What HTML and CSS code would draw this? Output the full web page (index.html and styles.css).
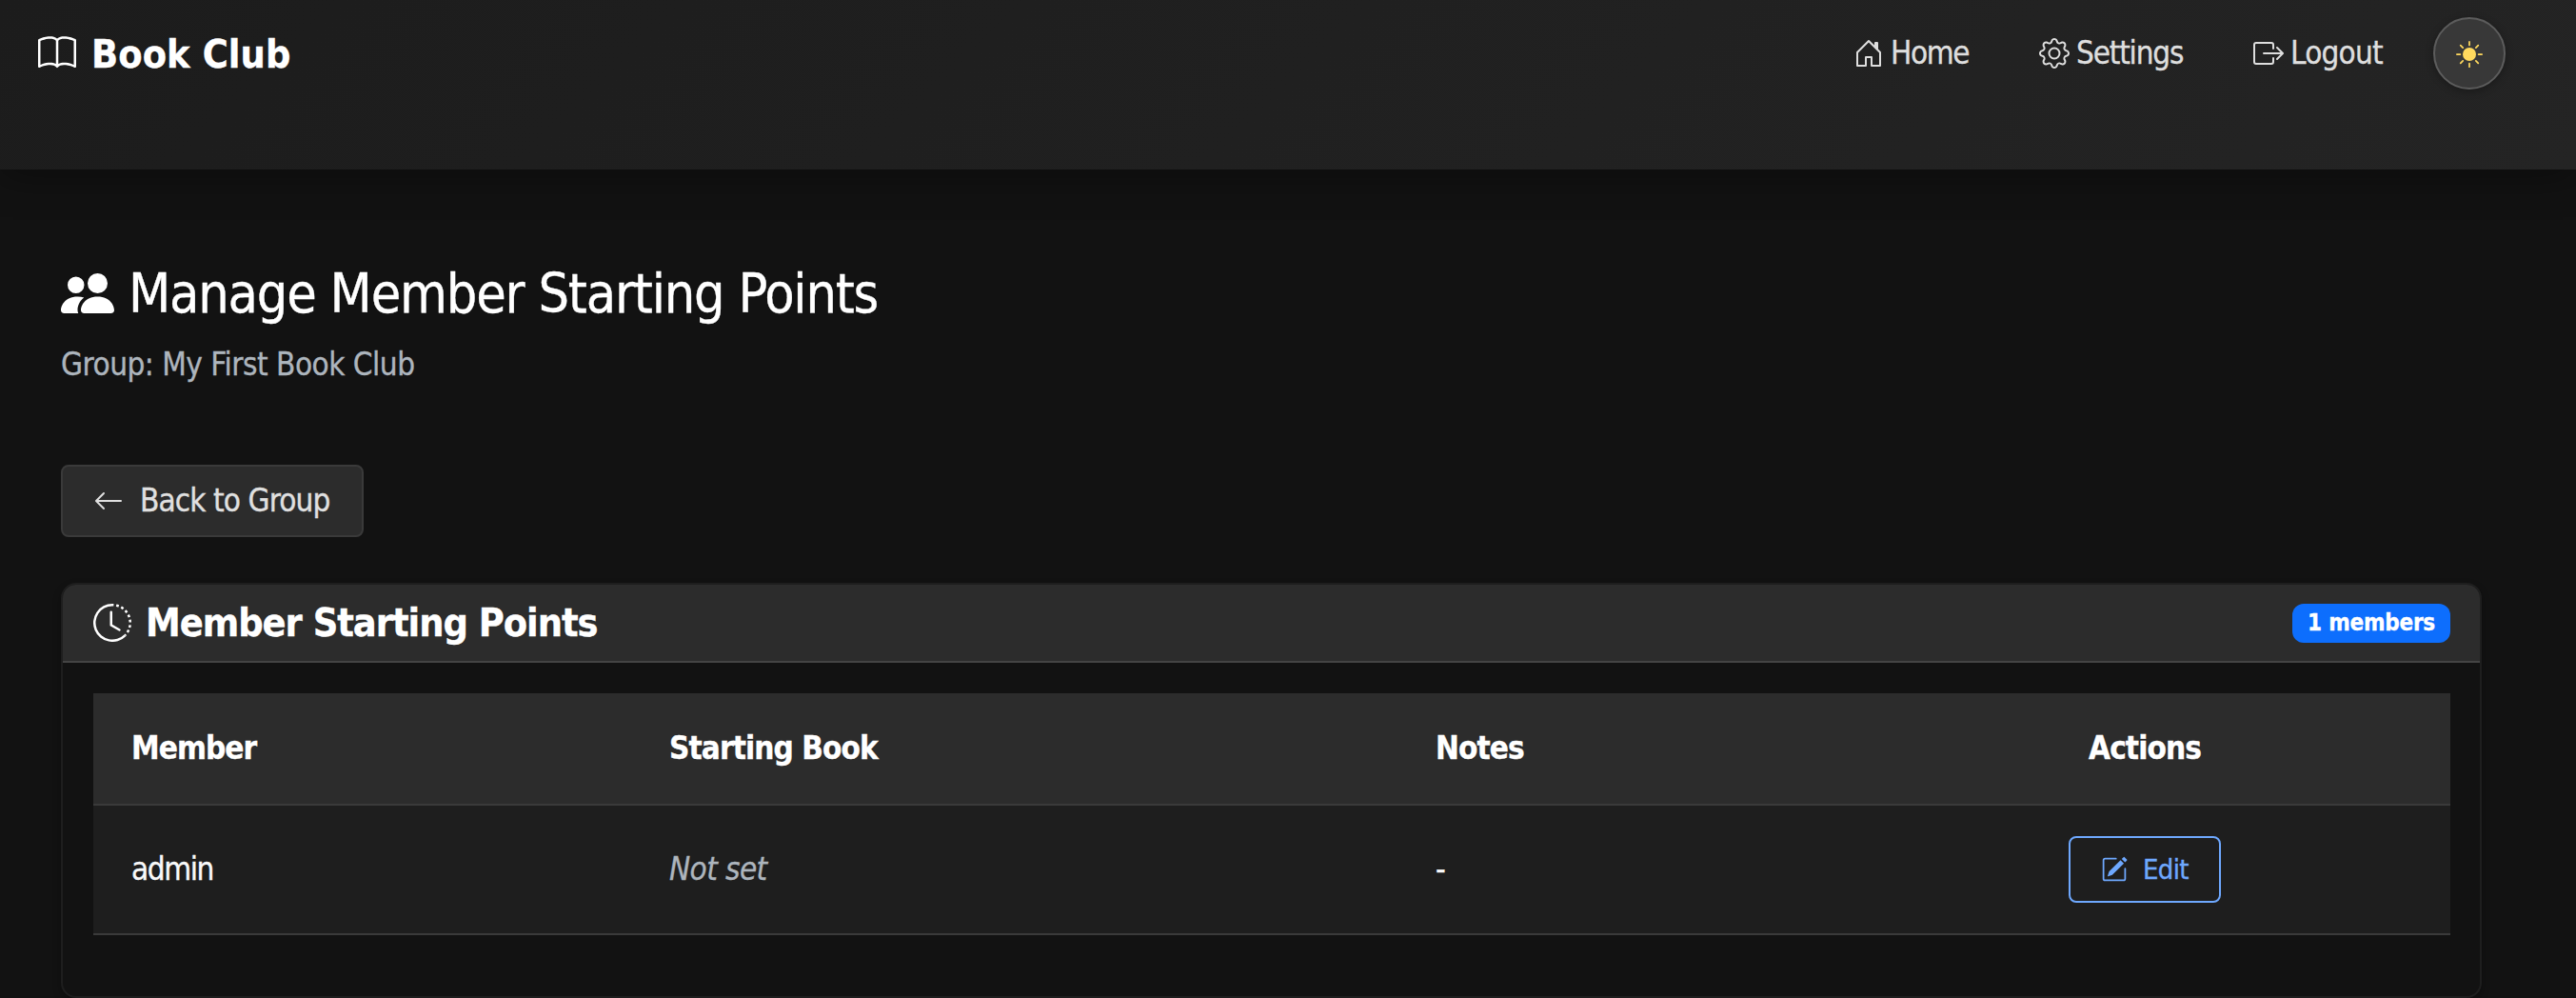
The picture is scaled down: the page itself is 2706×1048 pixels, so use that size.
FILE: index.html
```html
<!DOCTYPE html>
<html lang="en">
<head>
<meta charset="utf-8">
<title>Book Club</title>
<link rel="stylesheet" href="styles.css">
</head>
<body>
<header class="navbar">
  <a class="brand">
    <svg class="icon icon-brand" viewBox="0 0 16 16"><path d="M1 2.828c.885-.37 2.154-.769 3.388-.893 1.33-.134 2.458.063 3.112.752v9.746c-.935-.53-2.12-.603-3.213-.493-1.18.12-2.37.461-3.287.811zm7.5-.141c.654-.689 1.782-.886 3.112-.752 1.234.124 2.503.523 3.388.893v9.923c-.918-.35-2.107-.692-3.287-.81-1.094-.111-2.278-.039-3.213.492zM8 1.783C7.015.936 5.587.81 4.287.94c-1.514.153-3.042.672-3.994 1.105A.5.5 0 0 0 0 2.5v11a.5.5 0 0 0 .707.455c.882-.4 2.303-.881 3.68-1.02 1.409-.142 2.59.087 3.223.877a.5.5 0 0 0 .78 0c.633-.79 1.814-1.019 3.222-.877 1.378.139 2.8.62 3.681 1.02A.5.5 0 0 0 16 13.5v-11a.5.5 0 0 0-.293-.455c-.952-.433-2.48-.952-3.994-1.105C10.413.809 8.985.936 8 1.783"/></svg>
    <span class="brand-name">Book Club</span>
  </a>
  <nav class="nav">
    <a class="nav-link nav-home">
      <svg class="icon" viewBox="0 0 16 16"><path d="M8.354 1.146a.5.5 0 0 0-.708 0l-6 6A.5.5 0 0 0 1.500 7.500v7a.5.5 0 0 0 .5.5h4.500a.5.5 0 0 0 .5-.5v-4h2v4a.5.5 0 0 0 .5.5H14a.5.5 0 0 0 .5-.5v-7a.5.5 0 0 0-.146-.354L13 5.793V2.500a.5.5 0 0 0-.5-.5h-1a.5.5 0 0 0-.5.5v1.293zM2.500 14V7.707l5.500-5.500 5.500 5.500V14H10v-4a.5.5 0 0 0-.5-.5h-3a.5.5 0 0 0-.5.5v4z"/></svg>
      <span class="t-home">Home</span>
    </a>
    <a class="nav-link nav-settings">
      <svg class="icon" viewBox="0 0 16 16"><path d="M8 4.754a3.246 3.246 0 1 0 0 6.492 3.246 3.246 0 0 0 0-6.492M5.754 8a2.246 2.246 0 1 1 4.492 0 2.246 2.246 0 0 1-4.492 0"/><path d="M9.796 1.343c-.527-1.790-3.065-1.790-3.592 0l-.094.319a.873.873 0 0 1-1.255.520l-.292-.160c-1.640-.892-3.433.902-2.540 2.541l.159.292a.873.873 0 0 1-.520 1.255l-.319.094c-1.790.527-1.790 3.065 0 3.592l.319.094a.873.873 0 0 1 .520 1.255l-.160.292c-.892 1.640.901 3.434 2.541 2.540l.292-.159a.873.873 0 0 1 1.255.520l.094.319c.527 1.790 3.065 1.790 3.592 0l.094-.319a.873.873 0 0 1 1.255-.520l.292.160c1.640.893 3.434-.902 2.540-2.541l-.159-.292a.873.873 0 0 1 .520-1.255l.319-.094c1.790-.527 1.790-3.065 0-3.592l-.319-.094a.873.873 0 0 1-.520-1.255l.160-.292c.893-1.640-.902-3.433-2.541-2.540l-.292.159a.873.873 0 0 1-1.255-.520zm-2.633.283c.246-.835 1.428-.835 1.674 0l.094.319a1.873 1.873 0 0 0 2.693 1.115l.291-.160c.764-.415 1.600.420 1.184 1.185l-.159.292a1.873 1.873 0 0 0 1.116 2.692l.318.094c.835.246.835 1.428 0 1.674l-.319.094a1.873 1.873 0 0 0-1.115 2.693l.160.291c.415.764-.420 1.600-1.185 1.184l-.291-.159a1.873 1.873 0 0 0-2.693 1.116l-.094.318c-.246.835-1.428.835-1.674 0l-.094-.319a1.873 1.873 0 0 0-2.692-1.115l-.292.160c-.764.415-1.600-.420-1.184-1.185l.159-.291A1.873 1.873 0 0 0 1.945 8.930l-.319-.094c-.835-.246-.835-1.428 0-1.674l.319-.094A1.873 1.873 0 0 0 3.060 4.377l-.160-.292c-.415-.764.420-1.600 1.185-1.184l.292.159a1.873 1.873 0 0 0 2.692-1.115z"/></svg>
      <span class="t-settings">Settings</span>
    </a>
    <a class="nav-link nav-logout">
      <svg class="icon" viewBox="0 0 16 16"><path fill-rule="evenodd" d="M10 12.500a.5.5 0 0 1-.5.5h-8a.5.5 0 0 1-.5-.5v-9a.5.5 0 0 1 .5-.5h8a.5.5 0 0 1 .5.5v2a.5.5 0 0 0 1 0v-2A1.500 1.500 0 0 0 9.500 2h-8A1.500 1.500 0 0 0 0 3.500v9A1.500 1.500 0 0 0 1.500 14h8a1.500 1.500 0 0 0 1.500-1.500v-2a.5.5 0 0 0-1 0z"/><path fill-rule="evenodd" d="M15.854 8.354a.5.5 0 0 0 0-.708l-3-3a.5.5 0 0 0-.708.708L14.293 7.500H5.500a.5.5 0 0 0 0 1h8.793l-2.147 2.146a.5.5 0 0 0 .708.708z"/></svg>
      <span class="t-logout">Logout</span>
    </a>
    <button class="theme-toggle" aria-label="Toggle theme">
      <svg class="icon icon-sun" viewBox="0 0 16 16"><circle cx="8" cy="8" r="4"/><path stroke="currentColor" stroke-linecap="round" d="M8 .5v2M8 13.500v2M.5 8h2M13.500 8h2M2.700 2.700l1.400 1.400M11.900 11.900l1.400 1.400M2.700 13.300l1.400-1.400M11.900 4.100l1.400-1.400"/></svg>
    </button>
  </nav>
</header>
<main class="content">
  <h1 class="title">
    <svg class="icon icon-title" viewBox="0 0 16 16"><path d="M7 14s-1 0-1-1 1-4 5-4 5 3 5 4-1 1-1 1zm4-6a3 3 0 1 0 0-6 3 3 0 0 0 0 6m-5.784 6A2.240 2.240 0 0 1 5 13c0-1.355.68-2.750 1.936-3.720A6.300 6.300 0 0 0 5 9c-4 0-5 3-5 4s1 1 1 1zM4.500 8a2.500 2.500 0 1 0 0-5 2.500 2.500 0 0 0 0 5"/></svg>
    <span class="t-title">Manage Member Starting Points</span>
  </h1>
  <p class="subtitle">Group: My First Book Club</p>
  <a class="back">
    <svg class="icon" viewBox="0 0 16 16"><path fill-rule="evenodd" d="M15 8a.5.5 0 0 0-.5-.5H2.707l3.147-3.146a.5.5 0 1 0-.708-.708l-4 4a.5.5 0 0 0 0 .708l4 4a.5.5 0 0 0 .708-.708L2.707 8.500H14.500A.5.5 0 0 0 15 8"/></svg>
    <span class="t-back">Back to Group</span>
  </a>
  <section class="card">
    <div class="card-header">
      <h2 class="card-title">
        <svg class="icon icon-card" viewBox="0 0 16 16"><path d="M8.515 1.019A7 7 0 0 0 8 1V0a8 8 0 0 1 .589.022zm2.004.450a7 7 0 0 0-.985-.299l.219-.976q.576.129 1.126.342zm1.370.710a7 7 0 0 0-.439-.270l.493-.870a8 8 0 0 1 .979.654l-.615.789a7 7 0 0 0-.418-.302zm1.834 1.790a7 7 0 0 0-.653-.796l.724-.690q.406.429.747.910zm.744 1.352a7 7 0 0 0-.214-.468l.893-.450a8 8 0 0 1 .450 1.088l-.950.313a7 7 0 0 0-.179-.483m.530 2.507a7 7 0 0 0-.100-1.025l.985-.170q.100.580.116 1.170zm-.131 1.538q.050-.254.081-.510l.993.123a8 8 0 0 1-.230 1.155l-.964-.267q.069-.247.120-.501m-.952 2.379q.276-.436.486-.908l.914.405q-.240.540-.555 1.038zm-.964 1.205q.183-.183.350-.378l.758.653a8 8 0 0 1-.401.432z"/><path d="M8 1a7 7 0 1 0 4.950 11.950l.707.707A8.001 8.001 0 1 1 8 0z"/><path d="M7.500 3a.5.5 0 0 1 .5.5v5.210l3.248 1.856a.5.5 0 0 1-.496.868l-3.500-2A.5.5 0 0 1 7 9V3.500a.5.5 0 0 1 .5-.5"/></svg>
        <span class="t-card">Member Starting Points</span>
      </h2>
      <span class="badge">1 members</span>
    </div>
    <div class="card-body">
      <table class="members">
        <thead>
          <tr><th class="c-member">Member</th><th class="c-book">Starting Book</th><th class="c-notes">Notes</th><th class="c-actions">Actions</th></tr>
        </thead>
        <tbody>
          <tr>
            <td class="v-member">admin</td>
            <td class="v-book"><em class="unset">Not set</em></td>
            <td>-</td>
            <td class="v-actions"><a class="edit">
              <svg class="icon icon-edit" viewBox="0 0 16 16"><path d="M15.502 1.940a.5.5 0 0 1 0 .706L14.459 3.690l-2-2L13.502.646a.5.5 0 0 1 .707 0l1.293 1.293zm-1.750 2.456-2-2L4.939 9.210a.5.5 0 0 0-.121.196l-.805 2.414a.250.250 0 0 0 .316.316l2.414-.805a.5.5 0 0 0 .196-.120l6.813-6.814z"/><path fill-rule="evenodd" d="M1 13.500A1.500 1.500 0 0 0 2.500 15h11a1.500 1.500 0 0 0 1.500-1.500v-6a.5.5 0 0 0-1 0v6a.5.5 0 0 1-.5.5h-11a.5.5 0 0 1-.5-.5v-11a.5.5 0 0 1 .5-.5H9a.5.5 0 0 0 0-1H2.500A1.500 1.500 0 0 0 1 2.500z"/></svg>
              <span class="t-edit">Edit</span>
            </a></td>
          </tr>
        </tbody>
      </table>
    </div>
  </section>
</main>
</body>
</html>
```
FILE: styles.css
```css
* { box-sizing: border-box; }

body {
  margin: 0;
  height: 1048px;
  overflow: hidden;
  background: #121212;
  color: #f8f9fa;
  font: 33px/48px Tahoma, "DejaVu Sans Condensed", "DejaVu Sans", sans-serif;
  letter-spacing: -.9px;
  white-space: nowrap;
  -webkit-text-stroke: .35px currentColor;
}

.icon { flex: none; width: 32px; height: 32px; fill: currentColor; }

/* Top bar */
.navbar {
  display: flex;
  justify-content: space-between;
  height: 178px;
  padding: 18px 74px 0 40px;
  background: linear-gradient(135deg, #1c1c1c, #242424);
  box-shadow: 0 4px 40px rgba(0, 0, 0, .4);
}
.brand { display: flex; align-items: center; height: 76px; gap: 16px; color: #fff; font-size: 41px; font-weight: 700; letter-spacing: .1px; }
.icon-brand { width: 40px; height: 40px; }
.brand-name { padding-top: 2px; }
.nav { display: flex; align-items: center; height: 76px; color: #dedede; }
.nav-link { display: flex; align-items: center; gap: 7px; }
.nav-home { width: 195px; letter-spacing: -1.4px; }
.nav-settings { width: 225px; letter-spacing: -1.2px; }
.nav-logout { width: 189px; letter-spacing: -.8px; }
.theme-toggle {
  display: flex; align-items: center; justify-content: center;
  width: 76px; height: 76px; padding: 2px 0 0;
  border: 2px solid #5c5c5c; border-radius: 50%;
  background: #383838; color: #ffd95e;
  box-shadow: 0 2px 8px rgba(0, 0, 0, .3);
}
.icon-sun { width: 28px; height: 28px; }

/* Page heading */
.content { padding: 96px 98px 0 64px; }
.title { display: flex; align-items: center; gap: 15px; height: 68px; margin: 0; color: #fff; font-size: 57px; font-weight: 400; letter-spacing: -1.2px; }
.icon-title { width: 56px; height: 56px; }
.subtitle { margin: 17px 0 81px; color: #adb5bd; letter-spacing: -.5px; }
.back {
  display: flex; align-items: center; gap: 17px;
  width: 318px; height: 76px; padding-left: 32px;
  border: 2px solid #3a3a3a; border-radius: 8px;
  background: #2c2c2c; color: #e0e0e0;
}

/* Members card */
.card { height: 436px; width: 2543px; margin-top: 48px; border: 2px solid #1e1e1e; border-radius: 16px; box-shadow: 0 4px 8px rgba(0, 0, 0, .3); }
.card-header {
  display: flex; align-items: center; justify-content: space-between;
  height: 82px; padding: 0 31px 0 32px;
  border-bottom: 2px solid #444; border-radius: 14px 14px 0 0;
  background: #2c2c2c;
}
.card-title { display: flex; align-items: center; gap: 15px; margin: 0; color: #fff; font-size: 41px; font-weight: 700; letter-spacing: -1px; }
.icon-card { width: 40px; height: 40px; }
.badge { width: 166px; height: 41px; border-radius: 12px; background: #0d6efd; color: #fff; font-size: 24px; font-weight: 700; letter-spacing: -.2px; line-height: 41px; text-align: center; }
.card-body { padding: 32px 31px 0 32px; }
.members { width: 100%; table-layout: fixed; border-collapse: separate; border-spacing: 0; }
.members th, .members td { padding: 0 40px; border-bottom: 2px solid #3a3a3a; text-align: left; }
.members th { height: 118px; background: #2c2c2c; color: #fff; font-weight: 700; }
.members td { height: 136px; background: #1e1e1e; }
.members .v-member { letter-spacing: -1.4px; }
.members .c-member { width: 565px; }
.members .c-book { width: 805px; }
.members .c-notes { width: 464px; }
.members .c-actions, .members .v-actions { text-align: center; }
.unset { color: #adb5bd; letter-spacing: -.6px; }
.edit {
  display: flex; align-items: center; gap: 16px;
  width: 160px; height: 70px; margin: 0 auto; padding-left: 32px;
  border: 2px solid #6ea8fe; border-radius: 8px;
  color: #6ea8fe; font-size: 29px; letter-spacing: -.7px;
}
.icon-edit { width: 28px; height: 28px; }
```
